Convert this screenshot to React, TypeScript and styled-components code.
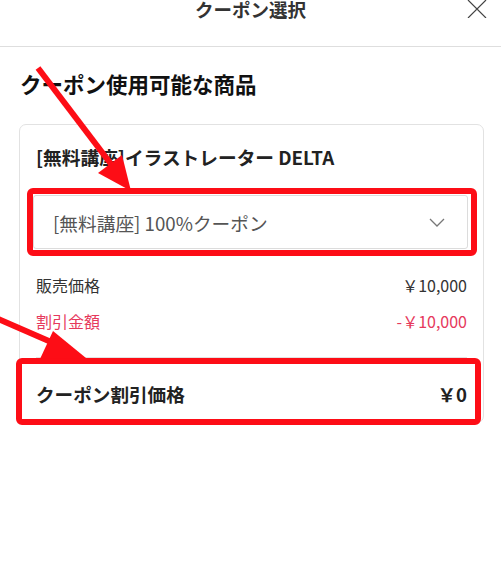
import React from "react";
import styled, { createGlobalStyle } from "styled-components";

const GlobalStyle = createGlobalStyle`
  html, body {
    margin: 0;
    padding: 0;
    background: #fff;
  }
  body {
    font-family: "Noto Sans CJK JP", "Noto Sans", sans-serif;
    color: #222;
  }
`;

const RED = "#fd0d16";

const Page = styled.div`
  position: relative;
  width: 501px;
  height: 581px;
  overflow: hidden;
  background: #fff;
`;

const Header = styled.header`
  display: grid;
  grid-template-columns: 1fr auto 1fr;
  align-items: start;
  height: 46px;
  border-bottom: 1px solid #dedede;
`;

const HeaderTitle = styled.h1`
  grid-column: 2;
  margin: 0;
  font-size: 18.5px;
  line-height: 18px;
  font-weight: 700;
  color: #333;
`;

const CloseButton = styled.button`
  grid-column: 3;
  justify-self: end;
  margin: -1px 14px 0 0;
  padding: 0;
  border: 0;
  background: none;
  width: 20px;
  height: 20px;
  display: flex;
  align-items: center;
  justify-content: center;
`;

const Body = styled.section`
  padding: 22px 17px 0 19px;
`;

const SectionTitle = styled.h2`
  margin: 0 0 25px 1px;
  font-size: 21.5px;
  line-height: 30px;
  font-weight: 700;
  color: #111;
`;

const Card = styled.div`
  border: 1px solid #e2e2e2;
  border-radius: 7px;
  padding: 19px 16px 15px;
`;

const CardTitle = styled.h3`
  margin: 0 0 25px;
  font-size: 18.7px;
  line-height: 26px;
  font-weight: 700;
  color: #222;
`;

const Marked = styled.div`
  position: relative;
`;

const Highlight = styled.span<{ $inset: string }>`
  position: absolute;
  inset: ${(p) => p.$inset};
  border: 6px solid ${RED};
  border-radius: 6px;
  pointer-events: none;
`;

const Select = styled.div`
  display: flex;
  align-items: center;
  justify-content: space-between;
  height: 52px;
  margin: 0 -1px 0 -3px;
  padding: 0 22px 0 19px;
  border: 1px solid #dcdcdc;
  border-radius: 3px;
  font-size: 18.7px;
  color: #555;
`;

const PriceList = styled.div`
  display: flex;
  flex-direction: column;
  gap: 12px;
  padding: 24px 0 24px;
`;

const PriceRow = styled.div<{ $accent?: boolean }>`
  display: flex;
  justify-content: space-between;
  font-size: 16px;
  line-height: 24px;
  color: ${(p) => (p.$accent ? "#e6395c" : "#333")};
`;

const TotalRow = styled.div`
  display: flex;
  justify-content: space-between;
  border-top: 1px solid #e2e2e2;
  padding-top: 23px;
  font-size: 18.6px;
  line-height: 26px;
  font-weight: 700;
  color: #222;
`;

const Overlay = styled.svg`
  position: absolute;
  left: 0;
  top: 0;
  pointer-events: none;
`;

export default function App() {
  return (
    <>
      <GlobalStyle />
      <Page>
        <Header>
          <HeaderTitle>クーポン選択</HeaderTitle>
          <CloseButton aria-label="閉じる">
            <svg width="20" height="18" viewBox="0 0 20 18">
              <path d="M1 0 L19 18 M19 0 L1 18" stroke="#444" strokeWidth="1.2" />
            </svg>
          </CloseButton>
        </Header>
        <Body>
          <SectionTitle>クーポン使用可能な商品</SectionTitle>
          <Card>
            <CardTitle>[無料講座]イラストレーター DELTA</CardTitle>
            <Marked>
              <Select>
                <span>[無料講座] 100%クーポン</span>
                <svg width="16" height="9" viewBox="0 0 16 9">
                  <path d="M1 1 L8 8 L15 1" fill="none" stroke="#777" strokeWidth="1.3" />
                </svg>
              </Select>
              <Highlight $inset="-7px -10px -7px -9px" />
            </Marked>
            <PriceList>
              <PriceRow>
                <span>販売価格</span>
                <span>￥10,000</span>
              </PriceRow>
              <PriceRow $accent>
                <span>割引金額</span>
                <span>-￥10,000</span>
              </PriceRow>
            </PriceList>
            <Marked>
              <TotalRow>
                <span>クーポン割引価格</span>
                <span>￥0</span>
              </TotalRow>
              <Highlight $inset="1px -14px -18px -20px" />
            </Marked>
          </Card>
        </Body>
        <Overlay width="501" height="581" viewBox="0 0 501 581">
          <line x1="38" y1="68" x2="114" y2="168" stroke={RED} strokeWidth="6" />
          <polygon points="131,191 122,155 98,173" fill={RED} />
          <line x1="-4" y1="318" x2="58" y2="345" stroke={RED} strokeWidth="6" />
          <polygon points="86,358 53,331 40,359" fill={RED} />
        </Overlay>
      </Page>
    </>
  );
}
